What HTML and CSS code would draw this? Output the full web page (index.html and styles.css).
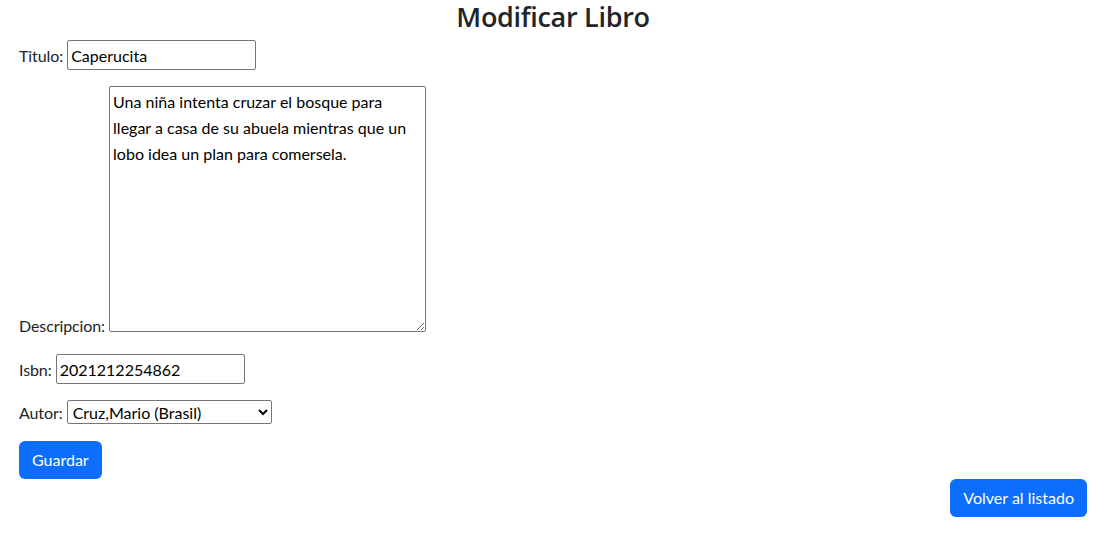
FILE: index.html
```html
<!DOCTYPE html>
<html lang="es">
<head>
<meta charset="utf-8">
<title>Modificar Libro</title>
<link rel="stylesheet" href="styles.css">
</head>
<body>
<div class="page">
  <h3 class="title">Modificar Libro</h3>
  <form class="form">
    <p class="row">
      <label for="titulo">Titulo:</label>
      <input id="titulo" class="field" type="text" value="Caperucita">
    </p>
    <p class="row">
      <label for="desc">Descripcion:</label>
      <textarea id="desc" class="area">Una niña intenta cruzar el bosque para llegar a casa de su abuela mientras que un lobo idea un plan para comersela.</textarea>
    </p>
    <p class="row">
      <label for="isbn">Isbn:</label>
      <input id="isbn" class="field" type="text" value="2021212254862">
    </p>
    <p class="row">
      <label for="autor">Autor:</label>
      <select id="autor" class="pick">
        <option selected>Cruz,Mario (Brasil)</option>
        <option>Otro autor</option>
      </select>
    </p>
    <button type="button" class="btn">Guardar</button>
  </form>
  <div class="actions">
    <a class="btn" href="#">Volver al listado</a>
  </div>
</div>
</body>
</html>
```
FILE: styles.css
```css
* { box-sizing: border-box; }
html, body { margin: 0; padding: 0; }
body {
  font-family: "Segoe UI", "Lato", "Noto Sans", sans-serif;
  font-size: 16px;
  line-height: 1.5;
  color: #212529;
  background: #fff;
}
.page {
  padding: 0 22px 0 19px;
}
.title {
  margin: 0 0 7px;
  text-align: center;
  font-family: "Segoe UI", "Open Sans", "Noto Sans", sans-serif;
  font-size: 27px;
  font-weight: 600;
  line-height: 33px;
  letter-spacing: -0.3px;
}
.form { margin: 0; }
.row { margin: 0 0 16px; }
label {
  color: #212529;
  letter-spacing: -0.1px;
}
.field, .area, .pick {
  font-family: inherit;
  font-size: 16px;
  color: #000;
  border: 1px solid #767676;
  border-radius: 2px;
  background: #fff;
  margin: 0;
}
.field {
  width: 189px;
  height: 30px;
  line-height: 24px;
  padding: 2px 3px;
}
.area {
  width: 317px;
  height: 246px;
  line-height: 26px;
  padding: 2px 3px;
  resize: both;
}
.pick {
  width: 205px;
  height: 24px;
  padding: 0 0 0 1px;
  line-height: 22px;
}
.btn {
  display: inline-block;
  font-family: inherit;
  font-size: 16px;
  line-height: 24px;
  padding: 7px 13px;
  color: #fff;
  background: #0d6efd;
  border: 0;
  border-radius: 6px;
  text-decoration: none;
  cursor: pointer;
}
.actions {
  display: flex;
  justify-content: flex-end;
}
```
